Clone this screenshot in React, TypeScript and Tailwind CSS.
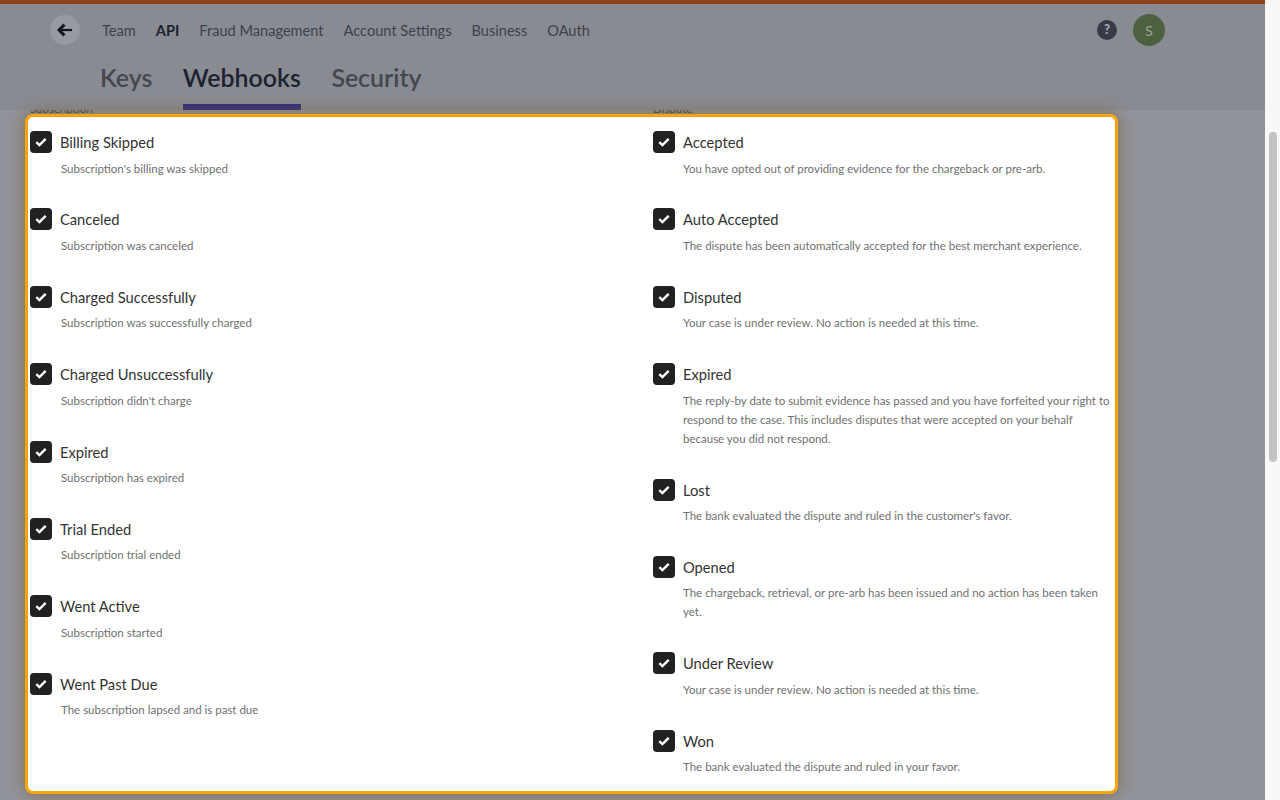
const subscription = [
  ["Billing Skipped", "Subscription's billing was skipped"],
  ["Canceled", "Subscription was canceled"],
  ["Charged Successfully", "Subscription was successfully charged"],
  ["Charged Unsuccessfully", "Subscription didn't charge"],
  ["Expired", "Subscription has expired"],
  ["Trial Ended", "Subscription trial ended"],
  ["Went Active", "Subscription started"],
  ["Went Past Due", "The subscription lapsed and is past due"],
];

const dispute = [
  ["Accepted", "You have opted out of providing evidence for the chargeback or pre-arb."],
  ["Auto Accepted", "The dispute has been automatically accepted for the best merchant experience."],
  ["Disputed", "Your case is under review. No action is needed at this time."],
  ["Expired", "The reply-by date to submit evidence has passed and you have forfeited your right to respond to the case. This includes disputes that were accepted on your behalf because you did not respond."],
  ["Lost", "The bank evaluated the dispute and ruled in the customer's favor."],
  ["Opened", "The chargeback, retrieval, or pre-arb has been issued and no action has been taken yet."],
  ["Under Review", "Your case is under review. No action is needed at this time."],
  ["Won", "The bank evaluated the dispute and ruled in your favor."],
];

const navItems = ["Team", "API", "Fraud Management", "Account Settings", "Business", "OAuth"];

function EventRow({ title, text, textClass }: { title: string; text: string; textClass: string }) {
  return (
    <div className="mb-[30.9px]">
      <div className="flex items-center gap-2 h-[22px]">
        <span className="flex items-center justify-center w-[22px] h-[22px] rounded-[4px] bg-[#212121]">
          <svg width="12" height="10" viewBox="0 0 12 10" fill="none">
            <path d="M1.3 5.2 4.4 8.1 10.7 1.8" stroke="#fff" strokeWidth="2.5" />
          </svg>
        </span>
        <span className="text-[14.7px] leading-[22px] text-[#333333]">{title}</span>
      </div>
      <p className={`mt-[5.5px] text-[11.5px] leading-[19px] text-[#707070] ${textClass}`}>{text}</p>
    </div>
  );
}

export default function App() {
  return (
    <div className="flex h-[800px] overflow-hidden bg-[#92949c] font-['Lato',sans-serif]">
      <div className="w-[1265px] flex flex-col relative">
        <div className="h-1 bg-[#8f431c]" />
        <div className="absolute left-[573px] top-1 w-[119px] h-3 bg-[#96481f] [clip-path:polygon(0_0,100%_0,95%_100%,5%_100%)] flex items-center justify-center text-[9.5px] tracking-[0.5px] text-[#d3aa94]">
          SANDBOX MODE
        </div>
        <header className="h-[106px] bg-[#898b93] relative">
          <div className="flex items-center pl-[50px] pt-[10px] pr-[100px]">
            <button className="flex items-center justify-center w-[30px] h-[30px] rounded-full bg-[#979aa1]">
              <svg width="16" height="14" viewBox="0 0 16 14" fill="none">
                <path d="M15 7H4" stroke="#14161c" strokeWidth="2.2" />
                <path d="M7.4 1.6 2 7l5.4 5.4" stroke="#14161c" strokeWidth="3" />
              </svg>
            </button>
            <nav className="flex gap-5 ml-[22px] pt-px text-[14.6px] text-[#3e414a]">
              {navItems.map((item) => (
                <span key={item} className={item === "API" ? "font-bold text-[#1c2130]" : ""}>
                  {item}
                </span>
              ))}
            </nav>
            <span className="ml-auto flex items-center justify-center w-5 h-5 rounded-full bg-[#373b47] text-[13px] font-black text-[#a6a8ae]">
              ?
            </span>
            <span className="ml-4 flex items-center justify-center w-8 h-8 rounded-full bg-[#4d6140] text-[14px] text-[#9aa594]">
              S
            </span>
          </div>
          <div className="flex gap-[30.5px] pl-[100px] mt-[11px] text-[24.9px] font-semibold text-[#444750]">
            <span className="h-[53px] leading-[41px]">Keys</span>
            <span className="h-[53px] leading-[41px] text-[#1d2230] border-b-[6px] border-[#2f2f7d]">Webhooks</span>
            <span className="h-[53px] leading-[41px]">Security</span>
          </div>
        </header>
        <div className="flex px-[30px] -mt-[8px] h-[12px] text-[11.5px] leading-[14px] text-[#44464e]">
          <span className="w-[623px]">Subscription</span>
          <span>Dispute</span>
        </div>
        <div className="relative ml-[25px] w-[1093px] h-[680px] bg-white border-[3px] border-[#fca40c] rounded-lg shadow-[0_0_18px_rgba(120,95,50,0.75)] pt-[14px] pl-[2px] flex">
          <div className="w-[623px]">
            {subscription.map(([title, text]) => (
              <EventRow key={title} title={title} text={text} textClass="pl-[31px]" />
            ))}
          </div>
          <div className="w-[459px]">
            {dispute.map(([title, text]) => (
              <EventRow key={title} title={title} text={text} textClass="pl-[30px]" />
            ))}
          </div>
        </div>
      </div>
      <div className="w-[15px] bg-[#f8f8f8] pt-[132px] pl-[4px]">
        <div className="w-2 h-[330px] rounded-full bg-[#c2c2c2]" />
      </div>
    </div>
  );
}
